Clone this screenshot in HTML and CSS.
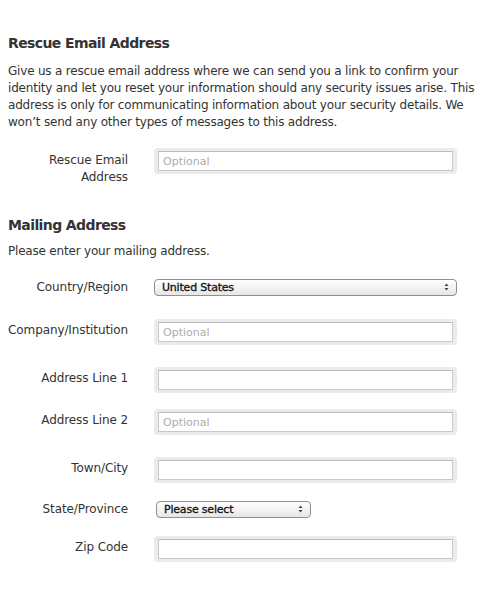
FILE: index.html
```html
<!DOCTYPE html>
<html lang="en">
<head>
<meta charset="UTF-8" />
<meta name="viewport" content="width=device-width, initial-scale=1" />
<title>Contact Details</title>
<link rel="stylesheet" href="styles.css">
</head>
<body>

<div class="page">
  <section class="section rescue">
    <h2 class="section-title">Rescue Email Address</h2>
    <p class="section-intro">Give us a rescue email address where we can send you a link to confirm your identity and let you reset your information should any security issues arise. This address is only for communicating information about your security details. We won’t send any other types of messages to this address.</p>

    <div class="form-row row-rescue">
      <label class="field-label" for="rescueEmail">Rescue Email<br>Address</label>
      <div class="field-box"><input type="email" id="rescueEmail" placeholder="Optional" /></div>
    </div>
  </section>

  <section class="section mailing">
    <h2 class="section-title">Mailing Address</h2>
    <p class="section-intro">Please enter your mailing address.</p>

    <div class="form-row select-row row-country">
      <label class="field-label" for="country">Country/Region</label>
      <div class="select-box wide">
        <select id="country">
          <option>United States</option>
          <option>Canada</option>
          <option>United Kingdom</option>
        </select>
        <svg class="select-arrows" width="5" height="8" viewBox="0 0 5 8"><path d="M2.5 0.5L4.5 3H0.5Z M2.5 7.5L4.5 5H0.5Z" fill="#444"/></svg>
      </div>
    </div>

    <div class="form-row row-company">
      <label class="field-label" for="company">Company/Institution</label>
      <div class="field-box"><input type="text" id="company" placeholder="Optional" /></div>
    </div>

    <div class="form-row row-line1">
      <label class="field-label" for="line1">Address Line 1</label>
      <div class="field-box"><input type="text" id="line1" /></div>
    </div>

    <div class="form-row row-line2">
      <label class="field-label" for="line2">Address Line 2</label>
      <div class="field-box"><input type="text" id="line2" placeholder="Optional" /></div>
    </div>

    <div class="form-row row-town">
      <label class="field-label" for="town">Town/City</label>
      <div class="field-box"><input type="text" id="town" /></div>
    </div>

    <div class="form-row select-row row-state">
      <label class="field-label" for="state">State/Province</label>
      <div class="select-box narrow">
        <select id="state">
          <option>Please select</option>
          <option>California</option>
          <option>New York</option>
        </select>
        <svg class="select-arrows" width="5" height="8" viewBox="0 0 5 8"><path d="M2.5 0.5L4.5 3H0.5Z M2.5 7.5L4.5 5H0.5Z" fill="#444"/></svg>
      </div>
    </div>

    <div class="form-row row-zip">
      <label class="field-label" for="zip">Zip Code</label>
      <div class="field-box"><input type="text" id="zip" /></div>
    </div>
  </section>
</div>

</body>
</html>
```

FILE: styles.css
```css
body {
  margin: 0;
  padding: 0;
  background: #fff;
  color: #333;
  font-family: 'DejaVu Sans', Verdana, sans-serif;
  font-size: 12px;
}
.page {
  padding: 0 8px;
  width: 474px;
}
.section-title {
  margin: 0;
  font-size: 14px;
  line-height: 20px;
  font-weight: bold;
  letter-spacing: -0.6px;
  color: #333;
}
.rescue .section-title {
  padding-top: 33px;
}
.mailing .section-title {
  padding-top: 29px;
}
.section-intro {
  margin: 10px 0 0;
  line-height: 17px;
  letter-spacing: -0.2px;
}
.mailing .section-intro {
  margin-top: 8px;
}
.form-row {
  display: flex;
  align-items: flex-start;
}
.field-label {
  width: 120px;
  flex-shrink: 0;
  margin-right: 26px;
  padding-top: 3px;
  text-align: right;
  line-height: 17px;
  font-size: 12px;
  letter-spacing: -0.1px;
  white-space: nowrap;
}
.row-rescue .field-label {
  padding-top: 4px;
}
.field-box {
  background: #ebebeb;
  padding: 3px 4px;
  border-radius: 4px;
}
.field-box input {
  display: block;
  box-sizing: border-box;
  width: 295px;
  height: 20px;
  margin: 0;
  padding: 0 4px;
  border: 1px solid #c9c9c9;
  border-top-color: #bdbdbd;
  border-radius: 0;
  background: #fff;
  font-family: 'DejaVu Sans', Verdana, sans-serif;
  font-size: 11px;
  color: #333;
  outline: none;
}
.field-box input::placeholder {
  color: #acacac;
}
.select-row {
  align-items: center;
}
.select-row .field-label {
  padding-top: 0;
}
.select-box {
  position: relative;
  height: 17px;
}
.select-box.wide {
  width: 303px;
}
.select-box.narrow {
  width: 155px;
  margin-left: 2px;
}
.select-box select {
  appearance: none;
  -webkit-appearance: none;
  box-sizing: border-box;
  display: block;
  width: 100%;
  height: 17px;
  margin: 0;
  padding: 0 16px 0 7px;
  border: 1px solid #8f8f8f;
  border-radius: 4px;
  background: linear-gradient(#ffffff, #f3f3f3 50%, #e6e6e6);
  font-family: 'DejaVu Sans', Verdana, sans-serif;
  font-size: 11px;
  line-height: 15px;
  font-weight: normal;
  letter-spacing: -0.2px;
  -webkit-text-stroke: 0.3px #111;
  color: #111;
  outline: none;
}
.select-arrows {
  position: absolute;
  right: 8px;
  top: 4px;
  pointer-events: none;
}
.row-rescue { margin-top: 17px; }
.row-country { margin-top: 19px; }
.row-company { margin-top: 23px; }
.row-line1 { margin-top: 22px; }
.row-line2 { margin-top: 16px; }
.row-town { margin-top: 22px; }
.row-state { margin-top: 18px; }
.row-zip { margin-top: 18px; }
```
